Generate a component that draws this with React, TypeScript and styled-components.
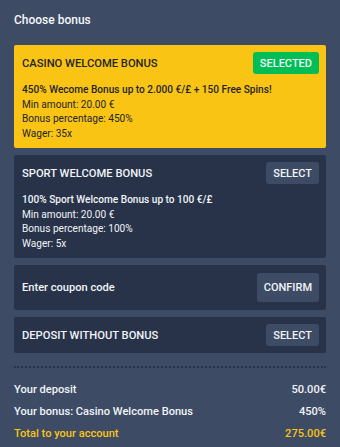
import React from 'react';
import styled, { createGlobalStyle, css } from 'styled-components';

const GlobalStyle = createGlobalStyle`
  html, body {
    margin: 0;
    padding: 0;
    background: #3e4b65;
  }
  body {
    font-family: Roboto, "Liberation Sans", Arial, sans-serif;
    -webkit-font-smoothing: antialiased;
  }
`;

const Page = styled.div`
  width: 340px;
  min-height: 447px;
  box-sizing: border-box;
  padding: 12px 14px 0;
  background: #3e4b65;
  color: #f1f4f8;
`;

const Heading = styled.div`
  font-size: 12px;
  font-weight: 500;
  line-height: 16px;
  color: #f4f6fa;
  margin-bottom: 17px;
`;

const List = styled.div`
  display: flex;
  flex-direction: column;
  gap: 7px;
`;

const Card = styled.div<{ $selected?: boolean; $tall?: boolean }>`
  border-radius: 2px;
  padding: ${({ $tall }) => ($tall ? '8px 7px 8px 8px' : '7px 7px 7px 8px')};
  background: #283349;
  color: #f1f4f8;

  ${({ $selected }) =>
    $selected &&
    css`
      background: #fac414;
      color: #23252b;
    `}
`;

const Header = styled.div`
  display: flex;
  align-items: center;
  justify-content: space-between;
`;

const Title = styled.div`
  font-size: 11.2px;
  font-weight: 500;
`;

const PlainLabel = styled.div`
  font-size: 11.1px;
  font-weight: 500;
`;

const Details = styled.div`
  margin-top: 9px;
  font-size: 10.1px;
  line-height: 14.5px;
`;

const Lead = styled.div`
  font-weight: 500;
`;

const Button = styled.button<{ $variant?: 'selected' | 'default'; $tall?: boolean }>`
  border: none;
  border-radius: 3px;
  font-family: inherit;
  font-size: 11px;
  font-weight: 500;
  height: ${({ $tall }) => ($tall ? '29px' : '22px')};
  padding: 0 7px;
  background: ${({ $variant }) => ($variant === 'selected' ? '#00be55' : '#3e4b65')};
  color: #f1f4f8;
  cursor: pointer;
`;

const Divider = styled.div`
  margin-top: 13px;
  border-top: 2px dotted #283349;
`;

const Summary = styled.div`
  margin-top: 10px;
  display: flex;
  flex-direction: column;
`;

const Row = styled.div<{ $accent?: boolean }>`
  display: flex;
  justify-content: space-between;
  align-items: center;
  height: 22px;
  font-size: 11.1px;
  font-weight: 500;
  color: ${({ $accent }) => ($accent ? '#fac414' : '#f1f4f8')};
`;

const bonuses = [
  {
    title: 'CASINO WELCOME BONUS',
    lead: '450% Wecome Bonus up to 2.000 €/£ + 150 Free Spins!',
    min: '20.00 €',
    pct: '450%',
    wager: '35x',
    selected: true
  },
  {
    title: 'SPORT WELCOME BONUS',
    lead: '100% Sport Welcome Bonus up to 100 €/£',
    min: '20.00 €',
    pct: '100%',
    wager: '5x',
    selected: false
  }
];

export default function App() {
  return (
    <>
      <GlobalStyle />
      <Page>
        <Heading>Choose bonus</Heading>
        <List>
          {bonuses.map(b => (
            <Card key={b.title} $selected={b.selected}>
              <Header>
                <Title>{b.title}</Title>
                <Button $variant={b.selected ? 'selected' : 'default'}>
                  {b.selected ? 'SELECTED' : 'SELECT'}
                </Button>
              </Header>
              <Details>
                <Lead>{b.lead}</Lead>
                <div>Min amount: {b.min}</div>
                <div>Bonus percentage: {b.pct}</div>
                <div>Wager: {b.wager}</div>
              </Details>
            </Card>
          ))}
          <Card $tall>
            <Header>
              <PlainLabel>Enter coupon code</PlainLabel>
              <Button $tall>CONFIRM</Button>
            </Header>
          </Card>
          <Card>
            <Header>
              <Title>DEPOSIT WITHOUT BONUS</Title>
              <Button>SELECT</Button>
            </Header>
          </Card>
        </List>
        <Divider />
        <Summary>
          <Row>
            <span>Your deposit</span>
            <span>50.00€</span>
          </Row>
          <Row>
            <span>Your bonus: Casino Welcome Bonus</span>
            <span>450%</span>
          </Row>
          <Row $accent>
            <span>Total to your account</span>
            <span>275.00€</span>
          </Row>
        </Summary>
      </Page>
    </>
  );
}
